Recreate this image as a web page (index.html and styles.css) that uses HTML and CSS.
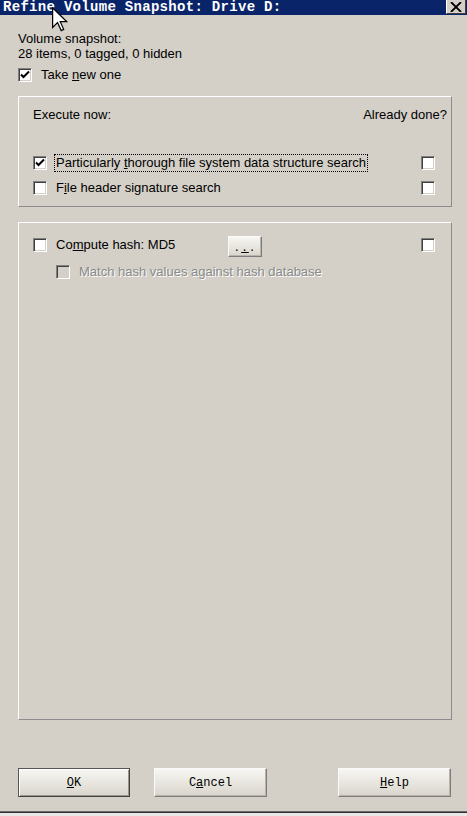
FILE: index.html
```html
<!DOCTYPE html>
<html>
<head>
<meta charset="utf-8">
<link rel="stylesheet" href="styles.css">
</head>
<body>
<div class="window">
  <div class="titlebar">
    <span class="title">Refine Volume Snapshot: Drive D:</span>
    <span class="close"><svg width="12" height="10" viewBox="0 0 12 10"><path d="M1 0 L11 10 M11 0 L1 10" stroke="#000" stroke-width="1.8" fill="none"/></svg></span>
  </div>
  <div class="content">
    <div class="info">
      <div>Volume snapshot:</div>
      <div>28 items, 0 tagged, 0 hidden</div>
    </div>
    <div class="row take">
      <span class="cb checked"><svg width="12" height="12" viewBox="0 0 12 12"><path d="M2 5.5 L4.5 8 L10 2.5" stroke="#000" stroke-width="2" fill="none"/></svg></span>
      <span class="lbl">Take <u>n</u>ew one</span>
    </div>

    <div class="group g1">
      <div class="ghead"><span>Execute now:</span><span>Already done?</span></div>
      <div class="row opt first">
        <span class="cb checked"><svg width="12" height="12" viewBox="0 0 12 12"><path d="M2 5.5 L4.5 8 L10 2.5" stroke="#000" stroke-width="2" fill="none"/></svg></span>
        <span class="lbl focus">Particularly <u>t</u>horough file system data structure search</span>
        <span class="cb right"></span>
      </div>
      <div class="row opt second">
        <span class="cb"></span>
        <span class="lbl">F<u>i</u>le header signature search</span>
        <span class="cb right"></span>
      </div>
    </div>

    <div class="group g2">
      <div class="row hash">
        <span class="cb"></span>
        <span class="lbl hashlbl">Co<u>m</u>pute hash: MD5</span>
        <span class="btn small">.<u>.</u>.</span>
        <span class="cb right"></span>
      </div>
      <div class="row match">
        <span class="cb disabled"></span>
        <span class="lbl dis">Match hash values against hash database</span>
      </div>
    </div>

    <div class="buttons">
      <span class="btn big default"><u>O</u>K</span>
      <span class="btn big cancel">C<u>a</u>ncel</span>
      <span class="btn big help"><u>H</u>elp</span>
    </div>
  </div>
  <div class="strip"></div>
  <svg class="cursor" width="16" height="25" viewBox="0 0 13 20">
    <path d="M0.5 0.5 L0.5 16.5 L4.5 12.5 L7.5 19 L9.5 18 L6.7 11.8 L12 11.8 Z" fill="#fff" stroke="#000" stroke-width="1" stroke-linejoin="miter"/>
  </svg>
</div>
</body>
</html>
```
FILE: styles.css
```css
* { box-sizing: border-box; }
html, body { margin: 0; padding: 0; }
body {
  background: #d4d0c8;
  font-family: "Liberation Sans", Arial, sans-serif;
  font-size: 13px;
  color: #000;
}
.window {
  position: relative;
  width: 467px;
  height: 816px;
  overflow: hidden;
  background: #d4d0c8;
}
.titlebar {
  height: 15px;
  background: #0a246a;
  display: flex;
  align-items: flex-start;
  justify-content: space-between;
}
.title {
  font-family: "Liberation Mono", "Courier New", monospace;
  font-weight: bold;
  font-size: 14px;
  letter-spacing: 0.3px;
  line-height: 15px;
  color: #fff;
  padding-left: 3px;
  white-space: nowrap;
}
.close {
  width: 20px;
  height: 14px;
  margin-right: 1px;
  background: #d4d0c8;
  border-style: solid;
  border-width: 0 1px 1px 1px;
  border-color: #fff #404040 #404040 #fff;
  display: flex;
  align-items: center;
  justify-content: center;
}
.content {
  padding: 0 15px 0 18px;
}
.info {
  margin-top: 16px;
  line-height: 15px;
}
.row {
  display: flex;
  align-items: center;
}
.take {
  margin-top: 6px;
  height: 16px;
}
.cb {
  width: 14px;
  height: 14px;
  flex: none;
  background: #fff;
  border: 1px solid;
  border-color: #808080 #fff #fff #808080;
  box-shadow: inset 1px 1px 0 #404040, inset -1px -1px 0 #d4d0c8;
  display: flex;
  align-items: center;
  justify-content: center;
}
.cb.disabled { background: #d4d0c8; }
.cb svg { display: block; }
.lbl {
  margin-left: 9px;
  line-height: 16px;
  white-space: nowrap;
}
.lbl.focus {
  margin-left: 7px;
  padding: 0 1px;
  border: 1px dotted #000;
}
.lbl.dis {
  color: #8a8a8a;
  text-shadow: 1px 1px 0 #fff;
}
.group {
  width: 434px;
  border: 1px solid;
  border-color: #fff #8c8c8c #8c8c8c #fff;
}
.g1 {
  margin-top: 13px;
  padding: 10px 4px 9px 14px;
}
.ghead {
  display: flex;
  justify-content: space-between;
  line-height: 15px;
}
.opt {
  height: 19px;
  padding-right: 12px;
}
.opt.first { margin-top: 31px; }
.opt.second { margin-top: 6px; }
.cb.right { margin-left: auto; }
.g2 {
  margin-top: 15px;
  height: 498px;
  padding: 13px 16px 0 14px;
}
.hash {
  align-items: flex-start;
  height: 21px;
}
.hash .cb { margin-top: 2px; }
.hash .cb.right { margin-top: 2px; }
.hashlbl {
  width: 172px;
  margin-top: 1px;
}
.match {
  margin-top: 7px;
  height: 16px;
}
.match .cb { margin-left: 23px; }
.btn {
  display: flex;
  align-items: center;
  justify-content: center;
  font-family: "Liberation Mono", "Courier New", monospace;
  font-size: 12px;
  background: linear-gradient(#f7f6f2, #e6e3dc 60%, #d8d4cc);
  border: 1px solid;
  border-color: #fafafa #7c7c7c #7c7c7c #fafafa;
  box-shadow: inset -1px -1px 0 #b8b4ac;
}
.btn.small {
  width: 34px;
  height: 21px;
  align-items: flex-end;
  padding-bottom: 3px;
  line-height: 10px;
  font-size: 11px;
  letter-spacing: 1px;
}
.buttons {
  display: flex;
  margin-top: 48px;
  height: 29px;
}
.btn.big { height: 29px; width: 113px; }
.btn.default {
  width: 112px;
  border-color: #555 #404040 #404040 #555;
  box-shadow: inset 1px 1px 0 #fff, inset -1px -1px 0 #9a968e;
}
.btn.cancel { margin-left: 24px; }
.btn.help { margin-left: 71px; }
.strip {
  margin-top: 14px;
  height: 5px;
  border-top: 1px solid #6a6a6a;
  background: linear-gradient(#303030 0 1px, #e8e8e8 1px);
}
.cursor {
  position: absolute;
  left: 52px;
  top: 7px;
}
```
